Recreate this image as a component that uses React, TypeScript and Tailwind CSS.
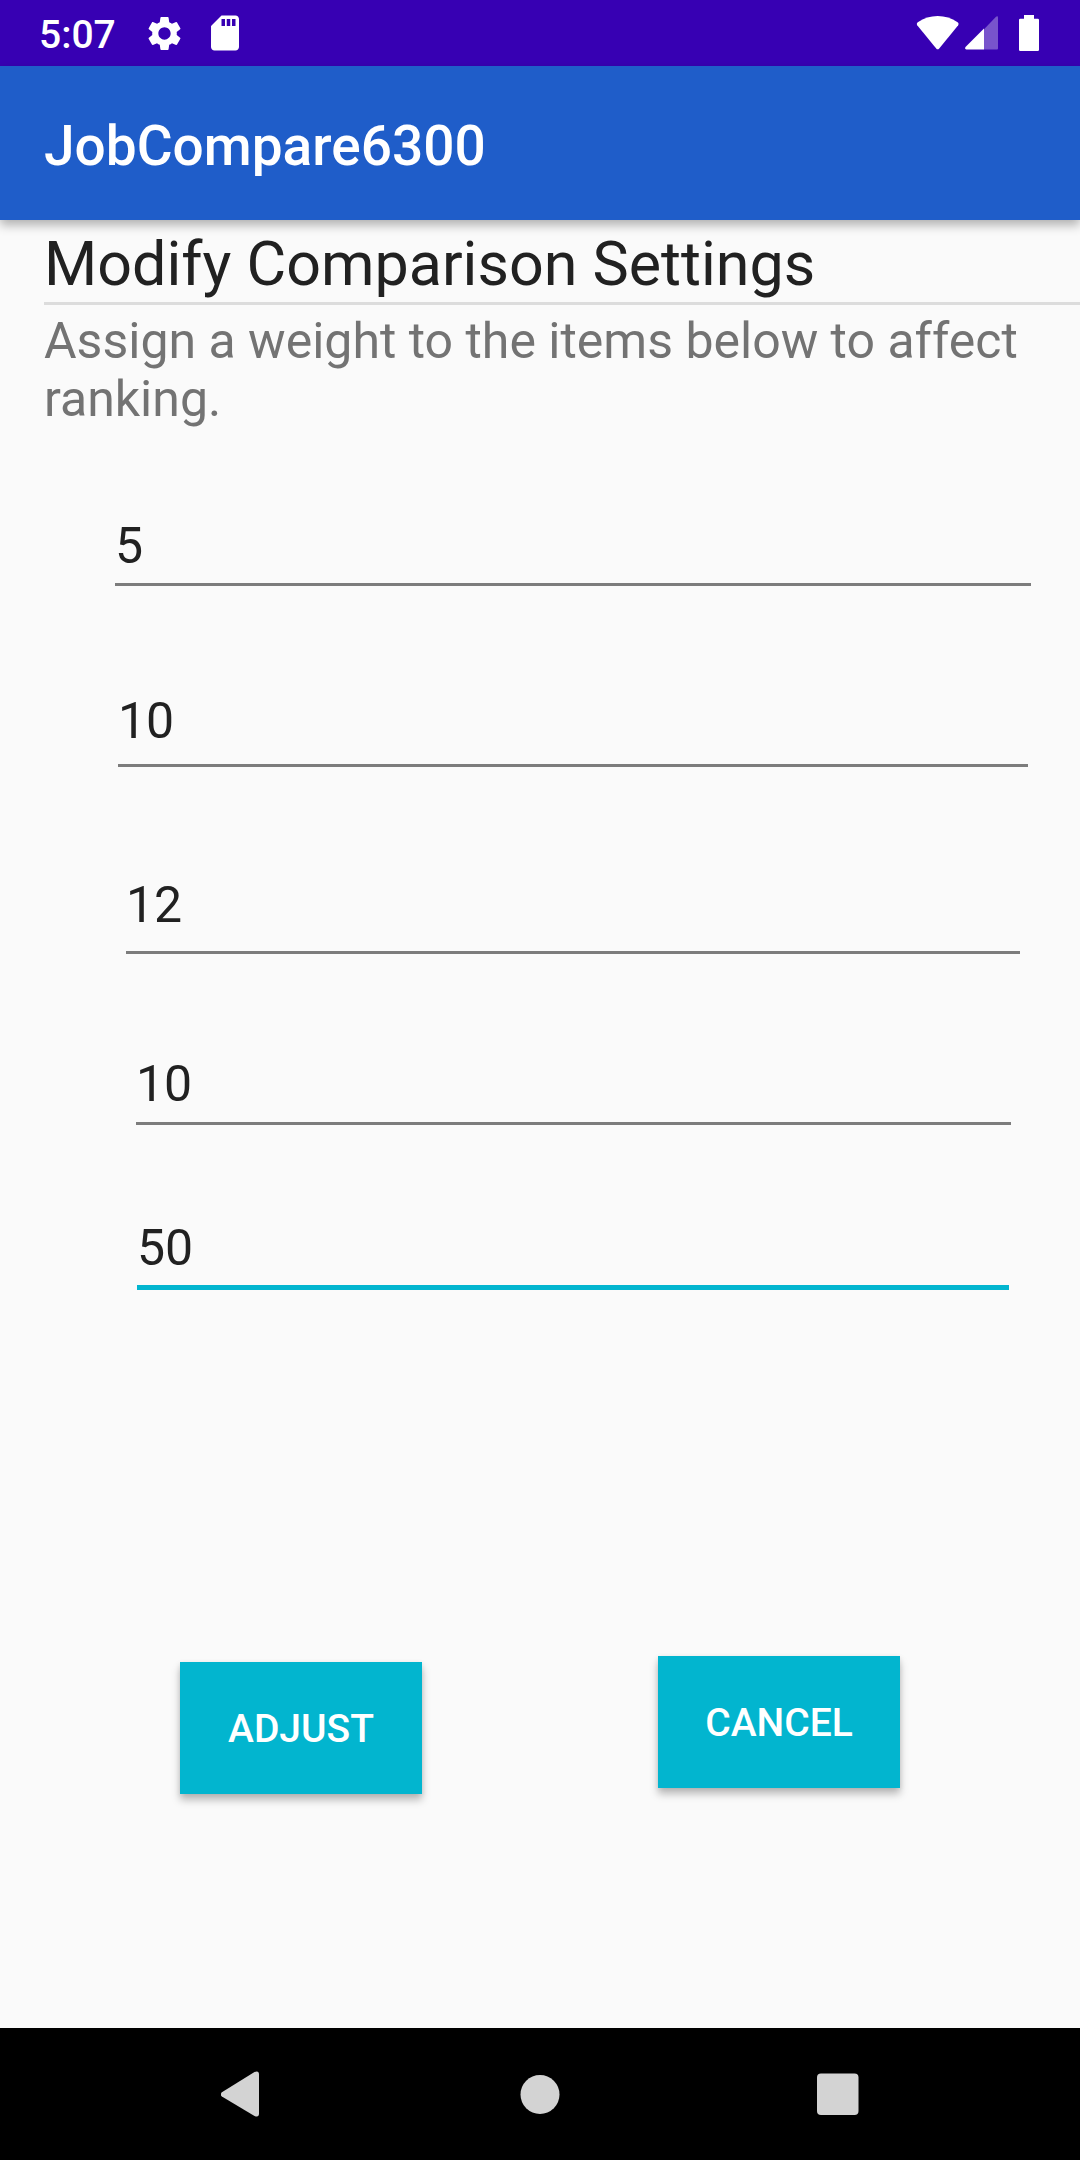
import { MdSdCard, MdSettings } from "react-icons/md";

type Weight = {
  label: string;
  value: string;
  row: string;
  line: string;
};

const weights: Weight[] = [
  {
    label: "Weight 1",
    value: "5",
    row: "mt-[88px] ml-[115px] mr-[49px]",
    line: "pb-[7px] border-b-3 border-[#7c7c7c]",
  },
  {
    label: "Weight 2",
    value: "10",
    row: "mt-[105px] ml-[118px] mr-[52px]",
    line: "pb-[13px] border-b-3 border-[#7c7c7c]",
  },
  {
    label: "Weight 3",
    value: "12",
    row: "mt-[108px] ml-[126px] mr-[60px]",
    line: "pb-[16px] border-b-3 border-[#7c7c7c]",
  },
  {
    label: "Weight 4",
    value: "10",
    row: "mt-[100px] ml-[136px] mr-[69px]",
    line: "pb-[8px] border-b-3 border-[#7c7c7c]",
  },
  {
    label: "Weight 5",
    value: "50",
    row: "mt-[93px] ml-[137px] mr-[71px]",
    line: "pb-[7px] border-b-5 border-[#02b5cf]",
  },
];

function StatusBar() {
  return (
    <div className="flex h-[66px] shrink-0 items-center bg-[#3700b3] pl-[39px] pr-[41px] text-white">
      <span className="pt-[3px] text-[39px] leading-[46px] font-medium">5:07</span>
      <MdSettings className="ml-[28px] size-[41px]" />
      <MdSdCard className="ml-[19px] size-[42px]" />
      <div className="ml-auto flex items-center">
        <svg className="h-[34px] w-[43px]" viewBox="0 0 43 34" fill="currentColor">
          <path d="M21.7 0C29 0 35.500 2.200 41.600 6.300Q43.100 7.600 42.200 9.200L23.200 32.400Q21.700 34.200 20.200 32.400L1.200 9.200Q.2 7.600 1.800 6.300C7.900 2.200 14.400 0 21.700 0Z" />
        </svg>
        <svg className="ml-[6px] h-[34px] w-[33px]" viewBox="0 0 33 34" fill="currentColor">
          <path
            d="M19 13.200L31 .7Q33 -.4 33 1.600V32.500Q33 33.500 32 33.500H19Z"
            opacity=".33"
          />
          <path d="M19 12.500V33.500H1.400Q-.7 33 .5 31Z" />
        </svg>
        <svg className="ml-[21px] h-[36px] w-[20px]" viewBox="0 0 20 36" fill="currentColor">
          <path d="M5 0H15V3.700H18.800Q20 3.700 20 4.900V34.800Q20 36 18.800 36H1.200Q0 36 0 34.800V4.900Q0 3.700 1.200 3.700H5Z" />
        </svg>
      </div>
    </div>
  );
}

function WeightField({ label, value, row, line }: Weight) {
  return (
    <div className={`flex ${row}`}>
      <input
        type="text"
        inputMode="numeric"
        aria-label={label}
        defaultValue={value}
        className={`w-full min-w-0 bg-transparent text-[50px] leading-[60px] text-[#212121] outline-none ${line}`}
      />
    </div>
  );
}

const actionButton =
  "h-[132px] w-[242px] bg-[#02b5cf] pt-[3px] text-[39px] font-medium text-white uppercase shadow-[0_6px_8px_rgba(0,0,0,0.26),0_1px_5px_rgba(0,0,0,0.08)]";

function NavigationBar() {
  return (
    <nav className="flex h-[132px] shrink-0 items-center justify-between bg-black px-[221px] text-[#d3d3d3]">
      <button type="button" aria-label="Back">
        <svg className="h-[46px] w-[42px]" viewBox="0 0 42 46" fill="currentColor">
          <path d="M.9 21.200L33.500 1Q38 -.8 38 3.500V42.500Q38 46.800 33.500 45L.9 25.500Q-1.700 23.300 .9 21.200Z" />
        </svg>
      </button>
      <button type="button" aria-label="Home">
        <svg className="size-[42px]" viewBox="0 0 42 42" fill="currentColor">
          <circle cx="21" cy="21.500" r="19.500" />
        </svg>
      </button>
      <button type="button" aria-label="Recent apps">
        <svg className="size-[42px]" viewBox="0 0 42 42" fill="currentColor">
          <rect y=".5" width="41.500" height="41.500" rx="4" />
        </svg>
      </button>
    </nav>
  );
}

export default function App() {
  return (
    <div className="flex min-h-screen flex-col bg-[#fafafa] font-[Roboto,sans-serif]">
      <StatusBar />
      <header className="z-10 flex h-[154px] shrink-0 items-center bg-[#1f5dc9] px-[44px] pt-[5px] shadow-[0_5px_10px_rgba(0,0,0,0.3)]">
        <h1 className="text-[55px] leading-[64px] font-medium text-white">JobCompare6300</h1>
      </header>
      <main className="flex grow flex-col">
        <div className="ml-[44px] border-b-3 border-[#dcdcdc] pt-[8px] pb-[2px]">
          <h2 className="text-[61px] leading-[72px] text-[#212121]">
            Modify Comparison Settings
          </h2>
        </div>
        <p className="mx-[44px] mt-[7px] text-[50px] leading-[58px] text-[#737373]">
          Assign a weight to the items below to affect ranking.
        </p>
        <form className="flex grow flex-col">
          {weights.map((weight) => (
            <WeightField key={weight.label} {...weight} />
          ))}
          <div className="mt-auto flex items-start justify-between px-[180px] pt-12 pb-[234px]">
            <button type="button" className={`mt-[6px] ${actionButton}`}>
              Adjust
            </button>
            <button type="button" className={actionButton}>
              Cancel
            </button>
          </div>
        </form>
      </main>
      <NavigationBar />
    </div>
  );
}
